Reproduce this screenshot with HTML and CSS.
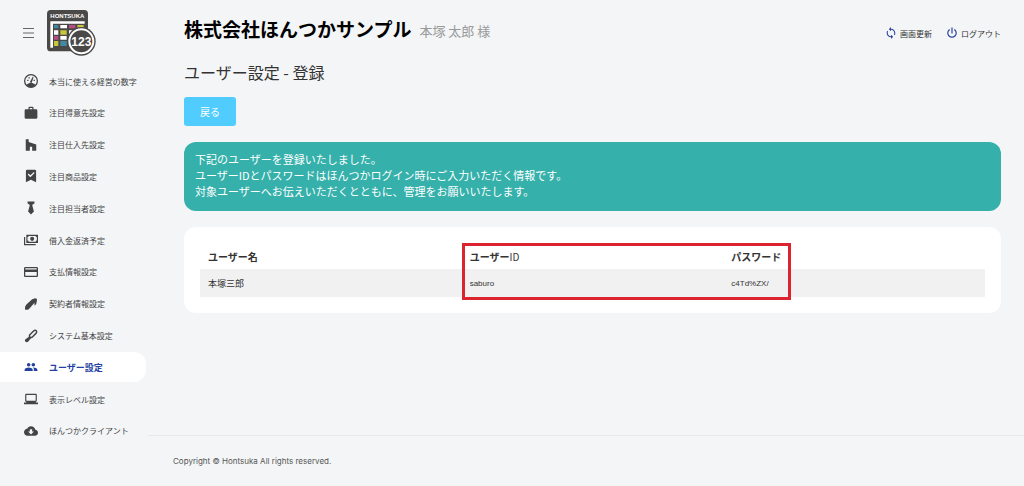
FILE: index.html
```html
<!DOCTYPE html>
<html lang="ja">
<head>
  <meta charset="UTF-8">
  <meta name="viewport" content="width=device-width, initial-scale=1">
  <title>ユーザー設定 - 登録</title>
  <link rel="stylesheet" href="styles.css">
</head>
<body>

<aside class="sidebar">
  <div class="brand">
    <button type="button" class="menu-toggle" aria-label="メニュー">
      <svg viewBox="0 0 12 12"><path d="M0 1.5h11M0 6h11M0 10.5h11" stroke="currentColor" fill="none"/></svg>
    </button>
    <a href="#" class="logo" aria-label="HONTSUKA">
      <svg viewBox="0 0 147 138">
        <rect width="123" height="124" rx="11" fill="#4b4948"/>
        <text x="61" y="23" text-anchor="middle" font-size="18" font-weight="bold" fill="#fff">HONTSUKA</text>
        <path d="M10 113V34h103v7H18v72z" fill="#fff"/>
        <path d="M21 45h13v10H21zM40 93h19v15H40z" fill="#3f8ba5"/>
        <path d="M40 45h20v10H40zM21 61h13v13H21zM66 61h19v13H66zM40 78h19v11H40z" fill="#fff"/>
        <path d="M66 45h19v10H66zM21 78h13v11H21z" fill="#b94c83"/>
        <path d="M91 45h19v8H91zM40 61h19v13H40zM21 93h13v15H21z" fill="#c8c63a"/>
        <circle cx="103" cy="94" r="43" fill="#4b4948"/>
        <circle cx="103" cy="94" r="36" fill="#4b4948" stroke="#fff" stroke-width="6"/>
        <text x="103" y="107" text-anchor="middle" font-size="36" font-weight="bold" fill="#fff">123</text>
      </svg>
    </a>
  </div>

  <nav class="nav">
    <a href="#" class="nav-item">
      <svg viewBox="1 1 22 22"><circle cx="12" cy="12" r="10" fill="none" stroke="currentColor" stroke-width="2"/><path d="M5 18c2-2 4-3 7-3s5 1 7 3c-2 3-4 4-7 4s-5-1-7-4zM10 14l5-9 1 1-3 9zM6 10h2v2H6zM8 6h2v2H8zM16 10h2v2h-2z"/></svg>
      <span>本当に使える経営の数字</span>
    </a>
    <a href="#" class="nav-item">
      <svg viewBox="1 1 22 22"><path d="M10 2h4a2 2 0 0 1 2 2v2h4a2 2 0 0 1 2 2v11a2 2 0 0 1-2 2H4a2 2 0 0 1-2-2V8a2 2 0 0 1 2-2h4V4a2 2 0 0 1 2-2m4 4V4h-4v2h4z"/></svg>
      <span>注目得意先設定</span>
    </a>
    <a href="#" class="nav-item">
      <svg viewBox="0 0 24 24"><path d="M3 2h5v5l13 4v11h-7v-7h-4v7H3z"/></svg>
      <span>注目仕入先設定</span>
    </a>
    <a href="#" class="nav-item">
      <svg viewBox="1 1 22 22"><path fill-rule="evenodd" d="M6 2h12a2 2 0 0 1 2 2v18l-8-4-8 4V4a2 2 0 0 1 2-2zm5 12 7-7-2-1-5 5-3-3-1 2z"/></svg>
      <span>注目商品設定</span>
    </a>
    <a href="#" class="nav-item">
      <svg viewBox="0 0 24 24"><path d="M6 1h12v3l-4 3 3 11-5 5-5-5 3-11-4-3z"/></svg>
      <span>注目担当者設定</span>
    </a>
    <a href="#" class="nav-item">
      <svg viewBox="0 0 24 24"><path fill-rule="evenodd" d="M4 3h20v14H4zm2 4v6c1 0 2 1 2 2h12c0-1 1-2 2-2V7c-1 0-2-1-2-2H8c0 1-1 2-2 2z"/><circle cx="14" cy="10" r="3.5"/><path d="M0 7h2v12h18v2H0z"/></svg>
      <span>借入金返済予定</span>
    </a>
    <a href="#" class="nav-item">
      <svg viewBox="1 1 22 22"><path d="M21 4H3c-1 0-2 1-2 2v12c0 1 1 2 2 2h18c1 0 2-1 2-2V6c0-1-1-2-2-2zm0 14H3v-6h18v6zm0-10H3V6h18v2z"/></svg>
      <span>支払情報設定</span>
    </a>
    <a href="#" class="nav-item">
      <svg viewBox="0 0 24 24"><path d="M2 22c-1-4 0-7 3-10l9-8 5-2c3 0 4 2 3 5l-1 5-3 3v-5L9 20c-2 2-4 2-7 2z"/></svg>
      <span>契約者情報設定</span>
    </a>
    <a href="#" class="nav-item">
      <svg viewBox="0 0 24 24"><path d="M10 10l6-6c2-2 4-2 5-1s1 4-1 5l-6 6c-3 2-6-1-4-4z" fill="none" stroke="currentColor" stroke-width="2.5"/><path d="M2 18l7-5 3 3-5 6c-3 2-7-1-5-4z"/></svg>
      <span>システム基本設定</span>
    </a>
    <a href="#" class="nav-item active" aria-current="page">
      <svg viewBox="0 0 24 24"><path d="M16 11c1.66 0 2.99-1.34 2.99-3S17.66 5 16 5s-3 1.34-3 3 1.34 3 3 3zm-8 0c1.66 0 2.99-1.34 2.99-3S9.66 5 8 5 5 6.34 5 8s1.34 3 3 3zm0 2c-2.33 0-7 1.17-7 3.5V19h14v-2.5c0-2.33-4.67-3.5-7-3.5zm8 0c-.29 0-.62.02-.97.05 1.16.84 1.97 1.97 1.97 3.45V19h6v-2.5c0-2.33-4.67-3.5-7-3.5z"/></svg>
      <span>ユーザー設定</span>
    </a>
    <a href="#" class="nav-item">
      <svg viewBox="0 0 24 24"><path d="M20 18v-1c1.1 0 2-.9 2-2V5c0-1.1-.9-2-2-2H4c-1.1 0-2 .9-2 2v10c0 1.1.9 2 2 2v1H0v3h24v-3h-4zM4 5h16v10H4V5z"/></svg>
      <span>表示レベル設定</span>
    </a>
    <a href="#" class="nav-item">
      <svg viewBox="0 0 24 24"><path d="M19.35 10.04C18.67 6.59 15.64 4 12 4 9.11 4 6.6 5.64 5.35 8.04 2.34 8.36 0 10.91 0 14c0 3.31 2.69 6 6 6h13c2.76 0 5-2.24 5-5 0-2.64-2.05-4.78-4.65-4.96zM17 13l-5 5-5-5h3V9h4v4h3z"/></svg>
      <span>ほんつかクライアント</span>
    </a>
  </nav>
</aside>

<div class="page">
  <header class="topbar">
    <h1 class="company">株式会社ほんつかサンプル</h1>
    <span class="person">本塚 太郎 様</span>
    <div class="actions">
      <a href="#">
        <svg viewBox="1 1 22 22"><path d="M12 4V1L8 5l4 4V6c3.31 0 6 2.69 6 6 0 1.01-.25 1.97-.7 2.8l1.46 1.46C19.54 15.03 20 13.57 20 12c0-4.42-3.58-8-8-8zm0 14c-3.31 0-6-2.69-6-6 0-1.01.25-1.97.7-2.8L5.24 7.74C4.46 8.97 4 10.43 4 12c0 4.42 3.58 8 8 8v3l4-4-4-4v3z"/></svg>
        <span>画面更新</span>
      </a>
      <a href="#">
        <svg viewBox="2 2 20 20"><path d="M16.56 5.44l-1.45 1.45A6 6 0 1 1 8.88 6.88L7.44 5.44a8 8 0 1 0 9.12 0M13 3h-2v10h2z"/></svg>
        <span>ログアウト</span>
      </a>
    </div>
  </header>

  <main class="content">
    <h2 class="page-title">ユーザー設定 - 登録</h2>
    <button type="button" class="btn-back">戻る</button>

    <div class="notice" role="status">
      下記のユーザーを登録いたしました。<br>
      ユーザーIDとパスワードはほんつかログイン時にご入力いただく情報です。<br>
      対象ユーザーへお伝えいただくとともに、管理をお願いいたします。
    </div>

    <section class="card">
      <div class="table-wrap">
        <table class="users">
          <thead>
            <tr><th scope="col">ユーザー名</th><th scope="col">ユーザー<span class="latin">ID</span></th><th scope="col">パスワード</th></tr>
          </thead>
          <tbody>
            <tr><td class="name">本塚三郎</td><td>saburo</td><td>c4Td%ZX/</td></tr>
          </tbody>
        </table>
        <div class="highlight"></div>
      </div>
    </section>
  </main>

  <footer class="footer">Copyright © Hontsuka All rights reserved.</footer>
</div>

</body>
</html>
```

FILE: styles.css
```css
* {
  box-sizing: border-box;
}
body {
  display: flex;
  min-height: 100vh;
  margin: 0;
  background: #f3f5f7;
  color: #333;
  font-family: "Noto Sans CJK JP", sans-serif;
  font-size: 8px;
}
a {
  color: inherit;
  text-decoration: none;
}
svg {
  display: block;
  fill: currentColor;
}
button {
  font-family: inherit;
  border: 0;
  cursor: pointer;
}

/* sidebar */
.sidebar {
  display: flex;
  flex-direction: column;
  flex: none;
  width: 148px;
  padding-bottom: 40px;
}
.brand {
  display: flex;
  align-items: center;
  gap: 12px;
  height: 66px;
  padding-left: 23px;
}
.menu-toggle {
  padding: 0;
  background: none;
  color: #666;
}
.menu-toggle svg {
  width: 12px;
  height: 12px;
}
.logo svg {
  width: 49px;
  height: 46px;
  font-family: "Liberation Sans", sans-serif;
}
.nav {
  display: flex;
  flex: 1;
  flex-direction: column;
  justify-content: space-between;
}
.nav-item {
  display: flex;
  align-items: center;
  gap: 11px;
  height: 30px;
  margin-right: 2px;
  padding-left: 24px;
  border-radius: 0 12px 12px 0;
  color: #444;
  white-space: nowrap;
}
.nav-item svg {
  width: 14px;
  height: 14px;
}
.nav-item.active {
  background: #fff;
  color: #2440a0;
  font-size: 9px;
  font-weight: bold;
}

/* page */
.page {
  display: flex;
  flex: 1;
  flex-direction: column;
  min-width: 0;
}
.topbar {
  display: flex;
  align-items: center;
  gap: 8px;
  height: 60px;
  padding: 6px 23px 0 36px;
}
.company {
  margin: 0;
  padding-bottom: 8px;
  color: #000;
  font-size: 19px;
  line-height: 28px;
}
.person {
  padding-bottom: 6px;
  color: #999;
  font-size: 13px;
}
.actions {
  display: flex;
  gap: 14px;
  margin-left: auto;
}
.actions a {
  display: flex;
  align-items: center;
  gap: 3px;
}
.actions svg {
  width: 12px;
  height: 12px;
  color: #2f45a3;
}
.content {
  flex: 1;
  padding: 0 23px 24px 36px;
}
.page-title {
  margin: 0 0 13px;
  font-size: 16px;
  font-weight: normal;
  line-height: 24px;
}
.btn-back {
  display: block;
  padding: 7px 16px;
  border-radius: 3px;
  background: #50ccff;
  color: #fff;
  font-size: 10px;
  line-height: 15px;
}
.notice {
  margin: 16px 0;
  padding: 9px 11px 12px;
  border-radius: 12px;
  background: #35b0ab;
  color: #fff;
  font-size: 11px;
  line-height: 16px;
}
.card {
  padding: 16px;
  border-radius: 12px;
  background: #fff;
}
.table-wrap {
  position: relative;
}
.users {
  width: 100%;
  border-collapse: collapse;
  table-layout: fixed;
}
.users th,
.users td {
  padding: 0 8px;
  text-align: left;
}
.users th {
  height: 26px;
  font-size: 10px;
}
.users .latin {
  font-weight: normal;
}
.users td {
  height: 28px;
  background: #f1f1f1;
  font-family: "Liberation Sans", sans-serif;
  font-size: 8px;
}
.users .name {
  font-family: inherit;
  font-size: 9px;
}
/* frame over the ID and password columns */
.highlight {
  position: absolute;
  top: 0;
  bottom: -3px;
  left: calc(100% / 3);
  width: 42%;
  border: 3px solid #dc2430;
}
.footer {
  padding: 18px 25px;
  border-top: 1px solid #e7e9eb;
  color: #555;
  font-family: Inter, sans-serif;
  font-size: 8px;
  line-height: 14px;
}
```
